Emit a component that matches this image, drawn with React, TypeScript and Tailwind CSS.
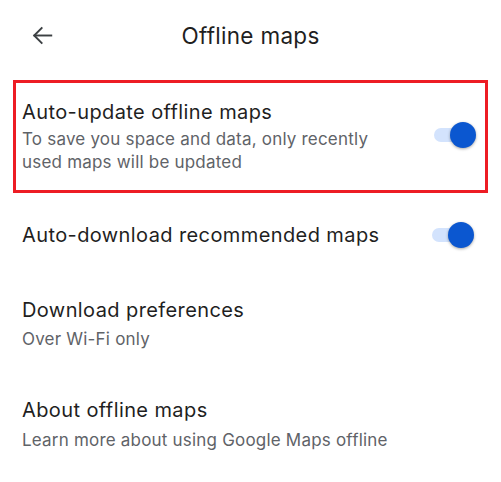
import React from 'react';

function Toggle() {
  return (
    <div className="relative w-[42px] h-[26px] flex items-center shrink-0">
      <div className="w-[38px] h-[14px] rounded-full bg-[#d3e3fd]" />
      <div className="absolute right-0 top-0 w-[26px] h-[26px] rounded-full bg-[#0b57d0] shadow-[0_1px_3px_rgba(0,0,0,0.35)]" />
    </div>
  );
}

export default function App() {
  return (
    <div className="w-[501px] h-[482px] bg-white text-[#1f1f1f] font-['Inter',sans-serif] overflow-hidden">
      {/* Top bar */}
      <div className="relative h-[72px] flex items-center justify-center">
        <svg className="absolute left-[32px] top-[25px]" width="21" height="21" viewBox="0 0 24 24" fill="none" stroke="#3c4043" strokeWidth="2.2" strokeLinecap="square">
          <path d="M22 12H3" />
          <path d="M11 3.5L2.5 12L11 20.5" strokeLinejoin="miter" />
        </svg>
        <h1 className="text-[22.5px] tracking-[0.3px] leading-none mt-[1px]">Offline maps</h1>
      </div>

      {/* Highlighted row */}
      <div className="mt-[8px] mx-[13px] h-[113px] border-[3px] border-[#ed1c24] flex items-center pl-[6px] pr-[9px]">
        <div className="flex-1">
          <div className="text-[20px] tracking-[0.4px] leading-[26px]">Auto-update offline maps</div>
          <div className="text-[17px] tracking-[0.2px] leading-[23px] text-[#5f6368] mt-[3px]">
            To save you space and data, only recently
            <br />
            used maps will be updated
          </div>
        </div>
        <div className="mb-[4px]">
          <Toggle />
        </div>
      </div>

      <div className="h-[84px] flex items-center pl-[22px] pr-[27px]">
        <div className="flex-1 text-[20px] tracking-[0.4px] leading-[26px]">Auto-download recommended maps</div>
        <Toggle />
      </div>

      <div className="h-[94px] flex flex-col justify-center pl-[22px]">
        <div className="text-[20px] tracking-[0.4px] leading-[26px]">Download preferences</div>
        <div className="text-[17px] tracking-[0.2px] leading-[23px] text-[#5f6368] mt-[5px]">Over Wi-Fi only</div>
      </div>

      <div className="h-[106px] flex flex-col justify-center pl-[22px]">
        <div className="text-[20px] tracking-[0.4px] leading-[26px]">About offline maps</div>
        <div className="text-[17px] tracking-[0.2px] leading-[23px] text-[#5f6368] mt-[6px]">Learn more about using Google Maps offline</div>
      </div>
    </div>
  );
}
